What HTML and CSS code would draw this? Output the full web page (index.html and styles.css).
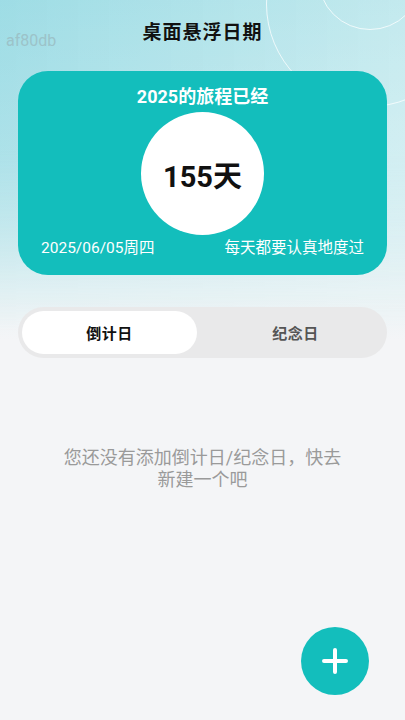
FILE: index.html
```html
<!DOCTYPE html>
<html lang="zh-CN">
<head>
  <meta charset="UTF-8">
  <title>桌面悬浮日期</title>
  <link rel="stylesheet" href="styles.css">
</head>
<body>
  <div class="page">
    <div class="deco deco-big"></div>
    <div class="deco deco-small"></div>

    <header class="topbar">
      <span class="tag">af80db</span>
      <h1>桌面悬浮日期</h1>
    </header>

    <section class="year-card">
      <h2>2025的旅程已经</h2>
      <div class="days-circle">155天</div>
      <div class="card-foot">
        <span>2025/06/05周四</span>
        <span>每天都要认真地度过</span>
      </div>
    </section>

    <div class="tabs">
      <button class="tab active">倒计日</button>
      <button class="tab">纪念日</button>
    </div>

    <p class="empty">您还没有添加倒计日/纪念日，快去新建一个吧</p>

    <button class="fab" aria-label="新建">
      <svg width="26" height="26" viewBox="0 0 26 26">
        <path d="M13 2v22M2 13h22" stroke="#fff" stroke-width="4" stroke-linecap="round"/>
      </svg>
    </button>
  </div>
</body>
</html>
```

FILE: styles.css
```css
* {
  box-sizing: border-box;
}

body {
  margin: 0;
  font-family: Roboto, "Noto Sans CJK SC", sans-serif;
  background: #f4f5f7;
  color: #111;
}

.page {
  position: relative;
  width: 405px;
  height: 720px;
  overflow: hidden;
  padding: 0 18px;
  background: linear-gradient(to bottom, #a6dfe6 0, #c4e9ee 160px, #e9f3f5 290px, #f4f5f7 340px);
}

.page::before {
  content: "";
  position: absolute;
  inset: 0;
  background: linear-gradient(to right, rgba(150, 218, 228, 0.5), rgba(230, 246, 248, 0.45));
  height: 330px;
  -webkit-mask-image: linear-gradient(to bottom, #000 0, #000 150px, transparent 330px);
  mask-image: linear-gradient(to bottom, #000 0, #000 150px, transparent 330px);
}

.deco {
  position: absolute;
  border-radius: 50%;
  border: 1.5px solid rgba(255, 255, 255, 0.75);
}

.deco-big {
  left: 266px;
  top: -99px;
  width: 206px;
  height: 206px;
}

.deco-small {
  left: 318px;
  top: -74px;
  width: 104px;
  height: 104px;
}

.topbar {
  position: relative;
  height: 71px;
  display: flex;
  justify-content: center;
}

.topbar h1 {
  margin: 22px 0 0;
  font-size: 19px;
  font-weight: 700;
  letter-spacing: 1px;
  line-height: 22px;
  color: #111;
}

.tag {
  position: absolute;
  left: -12px;
  top: 31px;
  font-size: 16px;
  color: #9cc3c9;
}

.year-card {
  position: relative;
  height: 204px;
  border-radius: 30px;
  background: #13bebc;
  color: #fff;
  display: flex;
  flex-direction: column;
  align-items: center;
  padding-top: 16px;
}

.year-card h2 {
  margin: 0;
  font-size: 18px;
  font-weight: 700;
  line-height: 20px;
}

.days-circle {
  width: 123px;
  height: 123px;
  margin-top: 5px;
  border-radius: 50%;
  background: #fff;
  color: #111;
  font-size: 29px;
  font-weight: 700;
  display: flex;
  align-items: center;
  justify-content: center;
}

.card-foot {
  align-self: stretch;
  display: flex;
  justify-content: space-between;
  padding: 0 23px;
  margin-top: 3px;
  font-size: 15.5px;
  line-height: 20px;
}

.tabs {
  position: relative;
  margin-top: 32px;
  height: 51px;
  border-radius: 26px;
  background: #e9e9ea;
  padding: 4px;
  display: flex;
  justify-content: space-between;
}

.tab {
  width: 175px;
  border: none;
  background: transparent;
  border-radius: 22px;
  font-family: inherit;
  font-size: 15px;
  font-weight: 700;
  letter-spacing: 0.5px;
  color: #555;
  padding: 0;
}

.tab.active {
  background: #fff;
  color: #111;
}

.empty {
  position: relative;
  width: 290px;
  margin: 89px auto 0;
  text-align: center;
  font-size: 18px;
  line-height: 22px;
  color: #9a9a9a;
}

.fab {
  position: absolute;
  left: 301px;
  top: 627px;
  width: 68px;
  height: 68px;
  border: none;
  border-radius: 50%;
  background: #13bebc;
  display: flex;
  align-items: center;
  justify-content: center;
  padding: 0;
}
```
